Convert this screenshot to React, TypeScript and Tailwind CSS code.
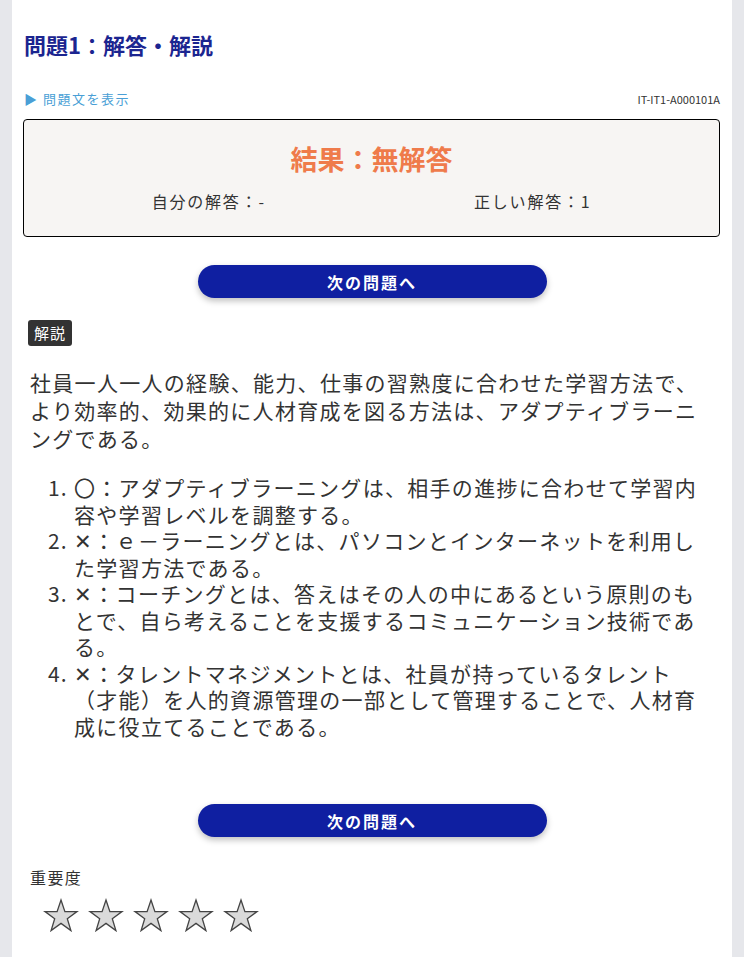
const font = { fontFamily: '"Noto Sans CJK JP", "Noto Sans", sans-serif' };

const NextButton = () => (
  <div className="flex justify-center">
    <button className="w-[349px] h-[33px] rounded-full bg-[#0f1fa1] text-white font-bold text-[16px] tracking-[2px] shadow-[0_3px_6px_rgba(0,0,0,0.25)]">
      次の問題へ
    </button>
  </div>
);

const Star = () => (
  <svg width="36" height="36" viewBox="0 0 36 36">
    <polygon
      points="18,2 21.9,13.6 34,13.6 24.3,20.8 27.9,32.5 18,25.4 8.1,32.5 11.7,20.8 2,13.6 14.1,13.6"
      fill="#dadada"
      stroke="#444"
      strokeWidth="1.3"
    />
  </svg>
);

const items = [
  "〇：アダプティブラーニングは、相手の進捗に合わせて学習内容や学習レベルを調整する。",
  "✕：ｅ－ラーニングとは、パソコンとインターネットを利用した学習方法である。",
  "✕：コーチングとは、答えはその人の中にあるという原則のもとで、自ら考えることを支援するコミュニケーション技術である。",
  "✕：タレントマネジメントとは、社員が持っているタレント（才能）を人的資源管理の一部として管理することで、人材育成に役立てることである。",
];

export default function App() {
  return (
    <div className="min-h-[957px] bg-[#e6e7eb] px-[12px]" style={font}>
      <div className="bg-white min-h-[957px] px-[12px] pt-[29px] pb-[20px] text-[#333]">
        <h1 className="text-[22px] font-bold text-[#1b2590] leading-[30px]">問題1：解答・解説</h1>

        <div className="mt-[30px] flex items-center justify-between">
          <span className="text-[13px] tracking-[1.5px] text-[#4a9fd6] leading-[20px]">▶ 問題文を表示</span>
          <span className="text-[11px] leading-[20px] text-[#333]">IT-IT1-A000101A</span>
        </div>

        <div className="mt-[10px] -ml-[1px] border border-black rounded-[4px] bg-[#f7f5f3] h-[118px] flex flex-col items-center pt-[20px]">
          <div className="text-[27px] font-bold text-[#ef7b4b] leading-[38px]">結果：無解答</div>
          <div className="mt-[11px] w-full grid grid-cols-2 text-[16px] tracking-[1.8px] leading-[24px]">
            <div className="text-center pl-[22px]">自分の解答：-</div>
            <div className="text-center pr-[25px]">正しい解答：1</div>
          </div>
        </div>

        <div className="mt-[28px]">
          <NextButton />
        </div>

        <div className="mt-[22px] pl-[4px]">
          <span className="inline-block bg-[#333] text-white text-[15px] tracking-[1px] leading-[26px] px-[6px] rounded-[3px]">解説</span>
        </div>

        <p className="mt-[22px] pl-[6px] pr-[8px] text-[21px] leading-[28px] tracking-[1.3px]">
          社員一人一人の経験、能力、仕事の習熟度に合わせた学習方法で、より効率的、効果的に人材育成を図る方法は、アダプティブラーニングである。
        </p>

        <ol className="mt-[22px] list-decimal pl-[50px] pr-[8px] text-[21px] leading-[26.5px] tracking-[1.3px]">
          {items.map((t) => (
            <li key={t}>{t}</li>
          ))}
        </ol>

        <div className="mt-[65px]">
          <NextButton />
        </div>

        <div className="mt-[28px] pl-[6px] text-[16px] tracking-[1.4px] leading-[24px]">重要度</div>
        <div className="mt-[9px] pl-[19px] flex gap-[9px]">
          {[0, 1, 2, 3, 4].map((i) => (
            <Star key={i} />
          ))}
        </div>
      </div>
    </div>
  );
}
